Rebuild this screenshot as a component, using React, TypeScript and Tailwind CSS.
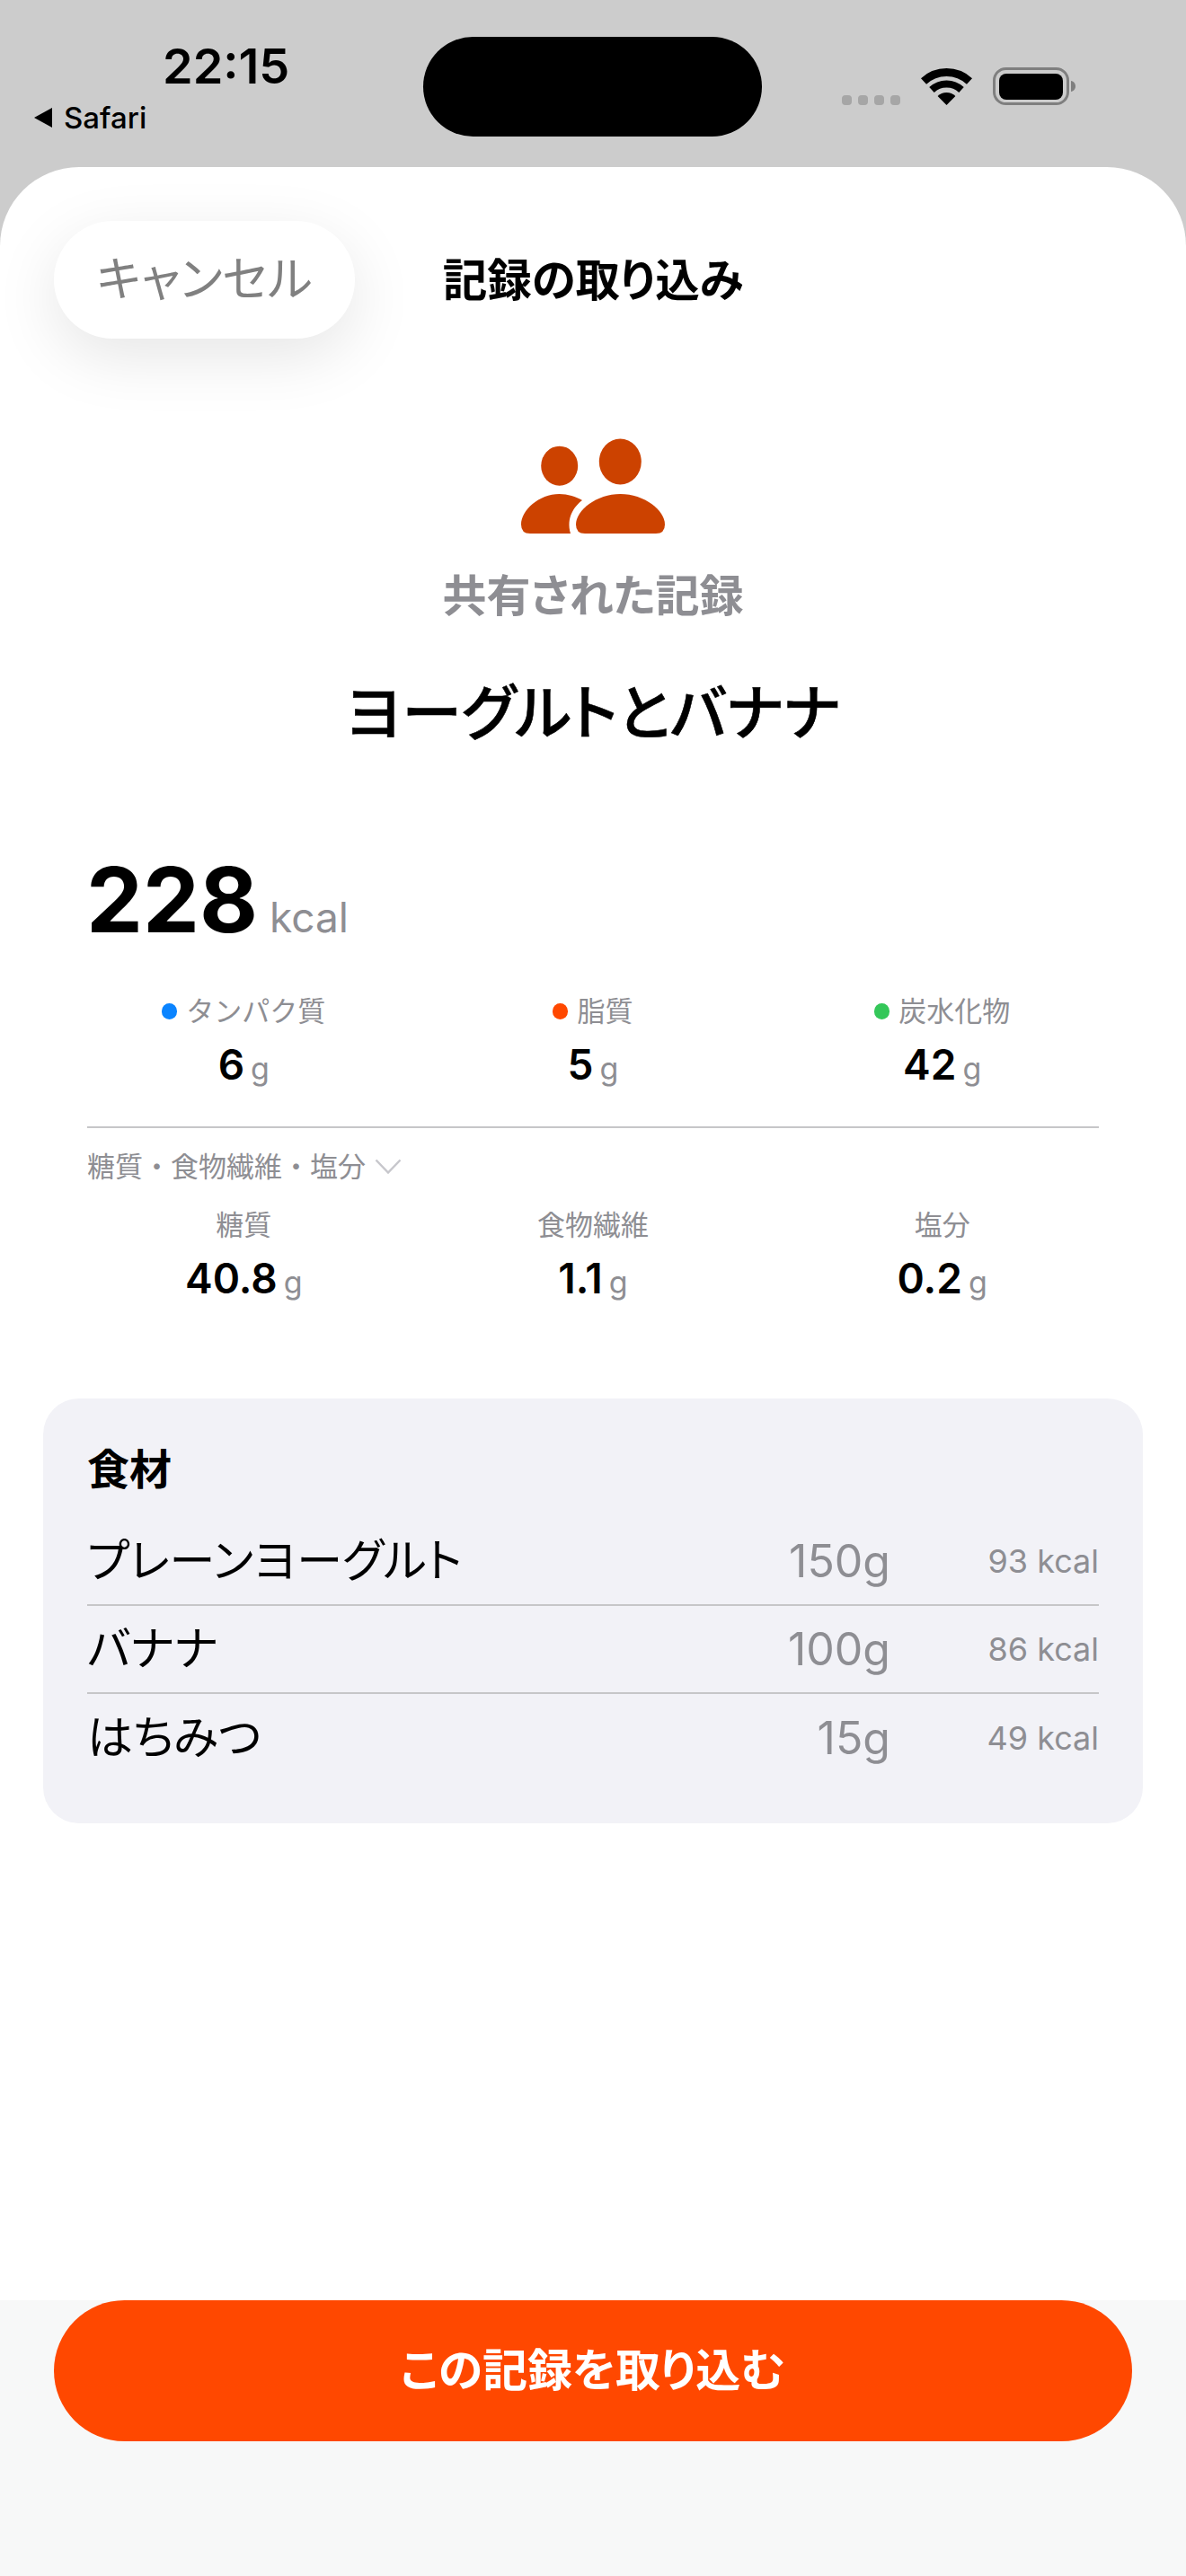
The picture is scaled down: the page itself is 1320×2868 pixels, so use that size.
import React from "react";

const Stat = ({ label, value, dot }: { label: string; value: string; dot?: string }) => (
  <div className="flex flex-col items-center">
    <div className="flex h-[40px] items-center gap-[10px] text-[31px] leading-[40px] text-[#8e8e93] [font-feature-settings:normal]">
      {dot && <span className={`h-[18px] w-[17px] rounded-full ${dot}`} />}
      <span>{label}</span>
    </div>
    <div className="mt-[14px] flex h-[50px] items-baseline gap-[7px]">
      <span className="text-[46px] leading-[50px] font-semibold text-black">{value}</span>
      <span className="text-[34px] leading-[50px] text-[#8e8e93]">g</span>
    </div>
  </div>
);

const Row = ({ name, amount, kcal, line }: { name: string; amount: string; kcal: string; line?: boolean }) => (
  <div className={`flex h-[98px] items-center ${line ? "border-b-2 border-[#c6c6c8]" : ""}`}>
    <span className="flex-1 text-[51px] leading-[60px] text-black">{name}</span>
    <span className="text-[50px] leading-[60px] text-[#8e8e93]">{amount}</span>
    <span className="w-[232px] text-right text-[36px] leading-[60px] text-[#8e8e93]">{kcal}</span>
  </div>
);

export default function App() {
  return (
    <div className="flex h-[2868px] w-[1320px] flex-col overflow-hidden bg-[#cccccc] font-['Inter','Noto_Sans_CJK_JP',sans-serif] [font-feature-settings:'palt']">
      {/* Status bar */}
      <div className="flex h-[186px] shrink-0 items-start">
        <div className="flex w-[471px] flex-col pt-[41px]">
          <span className="pl-[181px] text-[54px] leading-[66px] font-semibold text-black">22:15</span>
          <div className="mt-[5px] flex items-center gap-[13px] pl-[38px]">
            <svg width="20" height="22" viewBox="0 0 20 22"><path d="M0 11 20 0V22Z" fill="#000" /></svg>
            <span className="text-[33px] leading-[38px] font-medium text-black">Safari</span>
          </div>
        </div>
        <div className="mt-[41px] h-[111px] w-[377px] rounded-full bg-black" />
        <div className="mt-[75px] ml-[89px] flex items-end">
          <div className="flex gap-[7px]">
            {[0, 1, 2, 3].map((i) => (
              <span key={i} className="h-[11px] w-[11px] rounded-[4px] bg-[#a6a6a6]" />
            ))}
          </div>
          <svg className="ml-[23px]" width="57" height="42" viewBox="0 0 57 42">
            <path d="M3 15.5A37.5 37.5 0 0 1 54 15.5" fill="none" stroke="#000" strokeWidth="9" />
            <path d="M12 25A24 24 0 0 1 45 25" fill="none" stroke="#000" strokeWidth="8" />
            <path d="M28.5 42 18.6 32.1A14 14 0 0 1 38.4 32.1Z" fill="#000" />
          </svg>
          <svg className="ml-[23px]" width="92" height="42" viewBox="0 0 92 42">
            <rect x="1.5" y="1.5" width="82" height="39" rx="13" fill="none" stroke="#7f7f7f" strokeWidth="3" />
            <rect x="7" y="7" width="71" height="29" rx="8" fill="#000" />
            <path d="M87 15c3 .5 5 3 5 6s-2 5.500-5 6z" fill="#7f7f7f" />
          </svg>
        </div>
      </div>

      {/* Sheet */}
      <div className="flex flex-1 flex-col overflow-hidden rounded-t-[88px] bg-white">
        <div className="relative mt-[60px] flex h-[131px] shrink-0 items-center justify-center">
          <button className="absolute top-0 left-[60px] h-[131px] w-[335px] rounded-full bg-white text-[53px] text-[#808080] shadow-[0_20px_70px_rgba(0,0,0,0.1)]">
            キャンセル
          </button>
          <h1 className="text-[49.5px] leading-[60px] font-semibold text-black">記録の取り込み</h1>
        </div>

        <div className="mt-[111px] flex flex-col items-center">
          <svg width="160" height="106" viewBox="0 0 160 106" fill="#cc4200">
            <ellipse cx="42.700" cy="30.700" rx="20.500" ry="22" />
            <ellipse cx="110.300" cy="26" rx="23.500" ry="25.500" />
            <path d="M71 106Q61 106 61 96C61 80 84 62 110.500 62C137 62 160 80 160 96Q160 106 150 106Z" />
            <path d="M10 106Q0 106 0 96C0 80 20 62 42.500 62C52 62 61 65 68 69C59 76 50 88 55 106Z" />
          </svg>
          <p className="mt-[40px] text-[49px] leading-[60px] font-semibold text-[#8e8e93]">共有された記録</p>
          <h2 className="mt-[62px] text-[66.5px] leading-[76px] font-medium text-black [-webkit-text-stroke:0.6px_black]">ヨーグルトとバナナ</h2>
        </div>

        <div className="mt-[115px] flex items-baseline gap-[13px] pl-[96px]">
          <span className="text-[100px] leading-[110px] font-bold text-black">228</span>
          <span className="text-[46px] leading-[60px] text-[#8e8e93]">kcal</span>
        </div>

        <div className="mt-[49px] grid grid-cols-3 px-[77px]">
          <Stat label="タンパク質" value="6" dot="bg-[#0a84ff]" />
          <Stat label="脂質" value="5" dot="bg-[#ff4800]" />
          <Stat label="炭水化物" value="42" dot="bg-[#34c759]" />
        </div>

        <div className="mx-[97px] mt-[44px] h-[2px] bg-[#c6c6c8]" />

        <div className="mt-[23px] flex h-[40px] items-center gap-[10px] pl-[97px] text-[31px] leading-[40px] text-[#8e8e93] [font-feature-settings:normal]">
          <span>糖質・食物繊維・塩分</span>
          <svg width="30" height="18" viewBox="0 0 30 18" fill="none" stroke="#c7c7cc" strokeWidth="2.500">
            <path d="M1.500 1.500 15 15.500 28.500 1.500" />
          </svg>
        </div>

        <div className="mt-[25px] grid grid-cols-3 px-[77px]">
          <Stat label="糖質" value="40.8" />
          <Stat label="食物繊維" value="1.1" />
          <Stat label="塩分" value="0.2" />
        </div>

        <section className="mx-[48px] mt-[109px] h-[473px] rounded-[40px] bg-[#f2f2f7] px-[49px] pt-[49px]">
          <h3 className="text-[47px] leading-[60px] font-semibold text-black">食材</h3>
          <div className="mt-[24px]">
            <Row name="プレーンヨーグルト" amount="150g" kcal="93 kcal" line />
            <Row name="バナナ" amount="100g" kcal="86 kcal" line />
            <Row name="はちみつ" amount="15g" kcal="49 kcal" />
          </div>
        </section>

        <div className="mt-auto h-[307px] bg-[#f7f8f8] px-[60px]">
          <button className="h-[157px] w-full rounded-full bg-[#ff4800] text-[50px] font-bold text-white">
            この記録を取り込む
          </button>
        </div>
      </div>
    </div>
  );
}
